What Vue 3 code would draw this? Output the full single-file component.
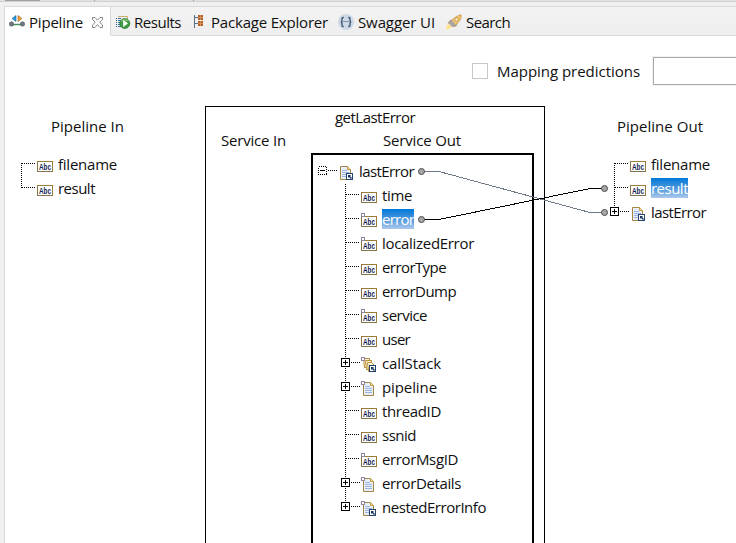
<script setup>
const tabs = [
  { id: 'pipeline', label: 'Pipeline', w: 54, active: true },
  { id: 'results', label: 'Results', w: 47 },
  { id: 'package', label: 'Package Explorer', w: 117 },
  { id: 'swagger', label: 'Swagger UI', w: 77 },
  { id: 'search', label: 'Search', w: 44 },
]

const pipelineIn = [
  { label: 'filename', w: 59, icon: 'abc', from: 10, to: 24 },
  { label: 'result', w: 37, icon: 'abc', from: 0, to: 11 },
]

const pipelineOut = [
  { label: 'filename', w: 59, icon: 'abc', from: 10, to: 24 },
  { label: 'result', w: 37, icon: 'abc', from: 0, to: 24, selected: true },
  { label: 'lastError', w: 55, icon: 'ref', from: 0, to: 6, toggle: 'plus' },
]

const serviceRoot = [{ label: 'lastError', w: 55, icon: 'ref', from: 0, to: 0, toggle: 'minus' }]

const serviceOut = [
  { label: 'time', w: 30, icon: 'abc' },
  { label: 'error', w: 32, icon: 'abc', opt: true, selected: true },
  { label: 'localizedError', w: 92, icon: 'abc', opt: true },
  { label: 'errorType', w: 64, icon: 'abc' },
  { label: 'errorDump', w: 74, icon: 'abc' },
  { label: 'service', w: 45, icon: 'abc', opt: true },
  { label: 'user', w: 28, icon: 'abc' },
  { label: 'callStack', w: 59, icon: 'stack', opt: true, toggle: 'plus' },
  { label: 'pipeline', w: 55, icon: 'doc', opt: true, toggle: 'plus' },
  { label: 'threadID', w: 59, icon: 'abc' },
  { label: 'ssnid', w: 34, icon: 'abc' },
  { label: 'errorMsgID', w: 76, icon: 'abc', opt: true },
  { label: 'errorDetails', w: 79, icon: 'doc', opt: true, toggle: 'plus' },
  { label: 'nestedErrorInfo', w: 104, icon: 'ref', opt: true, toggle: 'plus' },
].map((n, i, all) => ({ from: 0, to: i === all.length - 1 ? 6 : 24, ...n }))

const trees = {
  in: [{ cls: 'level', rows: pipelineIn }],
  service: [
    { cls: 'level', rows: serviceRoot },
    { cls: 'level nested', rows: serviceOut },
  ],
  out: [{ cls: 'level', rows: pipelineOut }],
}

const panels = [
  { id: 'in', title: 'Pipeline In', w: 73 },
  { id: 'mid' },
  { id: 'out', title: 'Pipeline Out', w: 86 },
]

// Spreads the letters so that a label fills its column width.
const vFit = {
  mounted(el, { value }) {
    const range = document.createRange()
    range.selectNodeContents(el)
    const natural = range.getBoundingClientRect().width
    el.style.width = value + 'px'
    el.style.letterSpacing = (value - natural) / el.textContent.trim().length + 'px'
  },
}

const treeOf = (id) => trees[id === 'mid' ? 'service' : id]
</script>

<template>
  <div class="window">
    <div class="toolbar"><i class="seg"></i><i class="tick"></i><i class="tick far"></i></div>

    <div class="view">
      <nav class="tabs">
        <div v-for="t in tabs" :key="t.id" class="tab" :class="[t.id, { active: t.active }]">
          <svg v-if="t.id === 'pipeline'" class="ticon" width="16" height="16">
            <path d="M3 10.5H13" stroke="#3f8f5a" stroke-width="1.4" />
            <path d="M7 1.5V7.5L3 4.5Z" fill="#2a9fe0" stroke="#1c5f90" stroke-width=".6" />
            <path d="M9 1.5V7.5L13 4.5Z" fill="#f2a63a" stroke="#9c5a10" stroke-width=".6" />
            <circle cx="2.5" cy="10" r="2.2" fill="#70777d" stroke="#555d64" stroke-width=".6" />
            <circle cx="13.5" cy="10" r="2.2" fill="#70777d" stroke="#555d64" stroke-width=".6" />
          </svg>
          <svg v-else-if="t.id === 'results'" class="ticon" width="16" height="16">
            <path d="M2 2.5H11.5V5" fill="none" stroke="#cdb06a" />
            <path d="M2 4.5H5M2 6.5H5M2 8.5H5M2 10.5H5M2 12.5H5" stroke="#3c6fa5" />
            <path d="M.5 4V13" stroke="#2b5787" stroke-dasharray="1 1" />
            <circle cx="8.8" cy="9.5" r="5" fill="#3f9b42" stroke="#2b7a30" stroke-width=".8" />
            <path d="M4.6 7.5A4.5 4.5 0 0 1 13 7.5Z" fill="#8fca82" opacity=".6" />
            <path d="M7.2 6L12 9.5L7.2 13Z" fill="#fff" />
          </svg>
          <svg v-else-if="t.id === 'package'" class="ticon" width="12" height="16">
            <path d="M.5 1V14M.5 3.5H4M.5 9.5H4" fill="none" stroke="#5b6f86" />
            <rect x="4" y="1" width="5" height="5" fill="#b7602a" />
            <rect x="4" y="7" width="5" height="5" fill="#b7602a" />
            <path d="M4 3.5H9M6.5 1V6M4 9.5H9M6.5 7V12" stroke="#dc9a64" stroke-width=".8" />
          </svg>
          <svg v-else-if="t.id === 'swagger'" class="ticon" width="16" height="16">
            <circle cx="8" cy="8" r="8" fill="#cfd9e6" />
            <path d="M5.7 3.5H5Q4 3.5 4 4.8V6.5Q4 8 2.8 8Q4 8 4 9.5V11.2Q4 12.5 5 12.5H5.7M10.3 3.5H11Q12 3.5 12 4.8V6.5Q12 8 13.2 8Q12 8 12 9.5V11.2Q12 12.5 11 12.5H10.3" fill="none" stroke="#35516f" stroke-width="1.3" />
            <path d="M5.5 7.5H10.5" stroke="#35516f" stroke-dasharray="1 1" />
          </svg>
          <svg v-else class="ticon" width="18" height="16">
            <path d="M1 15.5L2.5 10L7 12.5L4 15Z" fill="#ffe38a" />
            <path d="M2.5 9.5L5 6L9 5L6 10ZM7 13L11 12.5L13 9L8 9Z" fill="#a39a99" />
            <path d="M4.5 10Q8 3 16 .7Q17.5 6 8 13Z" fill="#f3c56d" stroke="#ca9340" stroke-width=".8" />
            <path d="M4.5 10L7 6.5L10.5 10.5L8 13Z" fill="#a8a5ad" />
            <circle cx="11.5" cy="5.5" r="1.7" fill="#fff0c9" stroke="#b08446" stroke-width=".7" />
          </svg>
          <span v-fit="t.w" class="text">{{ t.label }}</span>
          <svg v-if="t.active" class="close" width="11" height="11">
            <path d="M.5 .5H3L5.5 3.2L8 .5H10.5V2.5L7.7 5.3L10.5 8V10.5H8L5.5 7.6L3 10.5H.5V8L3.3 5.3L.5 2.5Z" fill="#fff" stroke="#777" stroke-width=".9" />
          </svg>
        </div>
      </nav>

      <div class="options">
        <span class="check"></span>
        <span v-fit="143" class="text">Mapping predictions</span>
        <span class="field"></span>
      </div>

      <main class="canvas">
        <section v-for="p in panels" :key="p.id" class="panel" :class="p.id">
          <div v-if="p.title" class="title"><span v-fit="p.w" class="text">{{ p.title }}</span></div>
          <template v-else>
            <div class="name"><span v-fit="80" class="text">getLastError</span></div>
            <div class="heads">
              <span v-fit="65" class="text">Service In</span>
              <span v-fit="78" class="text">Service Out</span>
            </div>
          </template>
          <div class="tree">
            <div v-for="(lv, k) in treeOf(p.id)" :key="k" :class="lv.cls">
              <div v-for="n in lv.rows" :key="n.label" class="row">
                <svg class="stem" width="20" height="24" shape-rendering="crispEdges" fill="none" stroke="#000">
                  <path :d="`M4.5 ${n.from}V${n.to}`" stroke-dasharray="1 1" />
                  <path :d="n.toggle ? 'M10 10.5H19' : 'M5 10.5H19'" stroke-dasharray="1 1" />
                  <g v-if="n.toggle">
                    <rect x=".5" y="6.5" width="8" height="8" fill="#fff" :stroke-dasharray="n.toggle === 'minus' ? '1 1' : 'none'" />
                    <path :d="n.toggle === 'minus' ? 'M2 10.5H7' : 'M2 10.5H7M4.5 8V13'" />
                  </g>
                </svg>
                <svg class="icon" width="16" height="24">
                  <g v-if="n.icon === 'abc'">
                    <rect x=".5" y="8.5" width="15" height="10" fill="#fff" stroke="#9b7c36" />
                    <path d="M.5 9V18.5H15.5" fill="none" stroke="#82764a" />
                    <text x="2" y="17" textLength="12" lengthAdjust="spacingAndGlyphs" class="abc">Abc</text>
                  </g>
                  <g v-else>
                    <g v-if="n.icon === 'stack'" fill="#fff5d8" stroke="#b68b31">
                      <path d="M2.5 6.5H8.5V15.5H3.5Z" />
                      <path d="M4.5 8.5H10.5V17.5H5.5Z" />
                      <path d="M6.5 10.5H10.5L13.5 13.5V19.5H7.5Z" />
                    </g>
                    <template v-else>
                      <path d="M2.5 6.5H9.5L12.5 9.5V19.5H2.5Z" fill="#e8effb" stroke="#a48643" />
                      <path d="M9.5 6.5V9.5H12.5" fill="#f7dc93" stroke="#c29b42" />
                      <path d="M4 10.5H9M4 12.5H11M4 14.5H11M4 16.5H11" stroke="#9db5dc" />
                    </template>
                    <g v-if="n.icon !== 'doc'">
                      <rect x="8.5" y="13.5" width="6" height="6" fill="#fff" stroke="#24436f" />
                      <path d="M10 15H13L12 16L14 18L13 19L11 17L10 18Z" fill="#16345f" />
                    </g>
                  </g>
                  <rect v-if="n.opt" x=".5" y="5.5" width="3" height="3" fill="#fff" stroke="#9486a8" />
                </svg>
                <span v-fit="n.w" class="text" :class="{ selected: n.selected }">{{ n.label }}</span>
              </div>
            </div>
          </div>
        </section>

        <svg class="links" width="200" height="64" fill="none">
          <g shape-rendering="crispEdges">
            <path d="M4 12.5H22L173 53.5H187" stroke="#6f7a86" />
            <path d="M4 60.5H22L173 29.5H187" stroke="#000" />
          </g>
          <g fill="#a6a6a6" stroke="#4c4c4c">
            <circle cx="4.5" cy="12.5" r="3" />
            <circle cx="4.5" cy="60.5" r="3" />
            <circle cx="187.5" cy="29.5" r="3" />
            <circle cx="187.5" cy="53.5" r="3" />
          </g>
        </svg>
      </main>
    </div>
  </div>
</template>

<style>
body { overflow: hidden; }
</style>

<style scoped>
.window { box-sizing: border-box; width: 736px; height: 543px; overflow: hidden; background: #f0f0f0; color: #101010; font: 15px/20px "Open Sans", "Noto Sans CJK KR", sans-serif; display: flex; flex-direction: column; }
.toolbar { height: 6px; flex: none; box-sizing: border-box; background: linear-gradient(#e2e2e2 1px, #d0d0d0 1px 2px, #f0f0f0 2px); display: flex; padding-left: 5px; }
.seg { width: 35px; height: 1px; background: #a0a0a0; }
.tick { width: 1px; height: 1px; margin-left: 54px; background: #999; }
.tick.far { margin-left: 98px; }
.view { flex: 1; min-height: 0; margin-left: 4px; border-left: 1px solid #d9d9d9; background: #fff; display: flex; flex-direction: column; }
.text { display: block; white-space: nowrap; height: 20px; flex: none; }
.tabs { flex: none; height: 30px; box-sizing: border-box; display: flex; border-top: 1px solid #d9d9d9; background: linear-gradient(#f3f3f3, #eee); }
.tab { display: flex; box-sizing: border-box; height: 29px; padding-top: 5px; border-bottom: 1px solid #d9d9d9; }
.tab.active { width: 106px; background: #fff; border-bottom-color: #fff; border-right: 1px solid #d9d9d9; padding-left: 4px; }
.tab.results { padding-left: 5px; }
.tab.package { padding-left: 13px; }
.tab.swagger { padding-left: 10px; }
.tab.search { padding-left: 10px; flex: 1; }
.ticon { flex: none; margin-right: 4px; margin-top: 2px; }
.results .ticon { margin-right: 2px; }
.package .ticon { margin-right: 5px; }
.search .ticon { margin-right: 3px; }
.close { margin: 5px 0 0 9px; }
.options { flex: none; height: 70px; box-sizing: border-box; padding: 21px 0 0 467px; display: flex; }
.check { box-sizing: border-box; flex: none; width: 16px; height: 16px; margin: 6px 9px 0 0; border: 1px solid #c8c8c8; }
.options .text { margin-top: 4px; }
.field { box-sizing: border-box; flex: none; width: 120px; height: 28px; margin-left: 13px; border: 1px solid #a9a9a9; box-shadow: 0 0 0 1px #f1f1f1; }
.canvas { position: relative; flex: 1; min-height: 0; display: flex; }
.panel { flex: none; box-sizing: border-box; }
.in { width: 200px; padding: 10px 0 0 12px; }
.in .title { padding-left: 34px; }
.out { width: 126px; margin-left: 65px; padding-top: 10px; }
.out .title { padding-left: 7px; }
.in .tree, .out .tree { margin-top: 17px; }
.mid { width: 340px; border: 1px solid #000; border-bottom: 0; overflow: hidden; display: flex; flex-direction: column; }
.name { display: flex; justify-content: center; }
.heads { display: flex; padding: 3px 0 0 15px; gap: 97px; }
.mid .tree { box-sizing: border-box; flex: 1; min-height: 0; width: 223px; margin: 3px 0 0 105px; padding: 5px 0 0 5px; border: 2px solid #000; border-bottom: 0; }
.nested { padding-left: 23px; }
.row { display: flex; height: 24px; }
.stem { flex: none; }
.icon { flex: none; margin-right: 5px; overflow: visible; }
.row .text { margin-top: 1px; }
.selected { color: #fff; background: linear-gradient(#0078d7, #4d97dd 50%, #abc9ec); }
.abc { font: bold 9.5px "Liberation Sans", sans-serif; fill: #101c50; }
.links { position: absolute; left: 412px; top: 53px; }
</style>
